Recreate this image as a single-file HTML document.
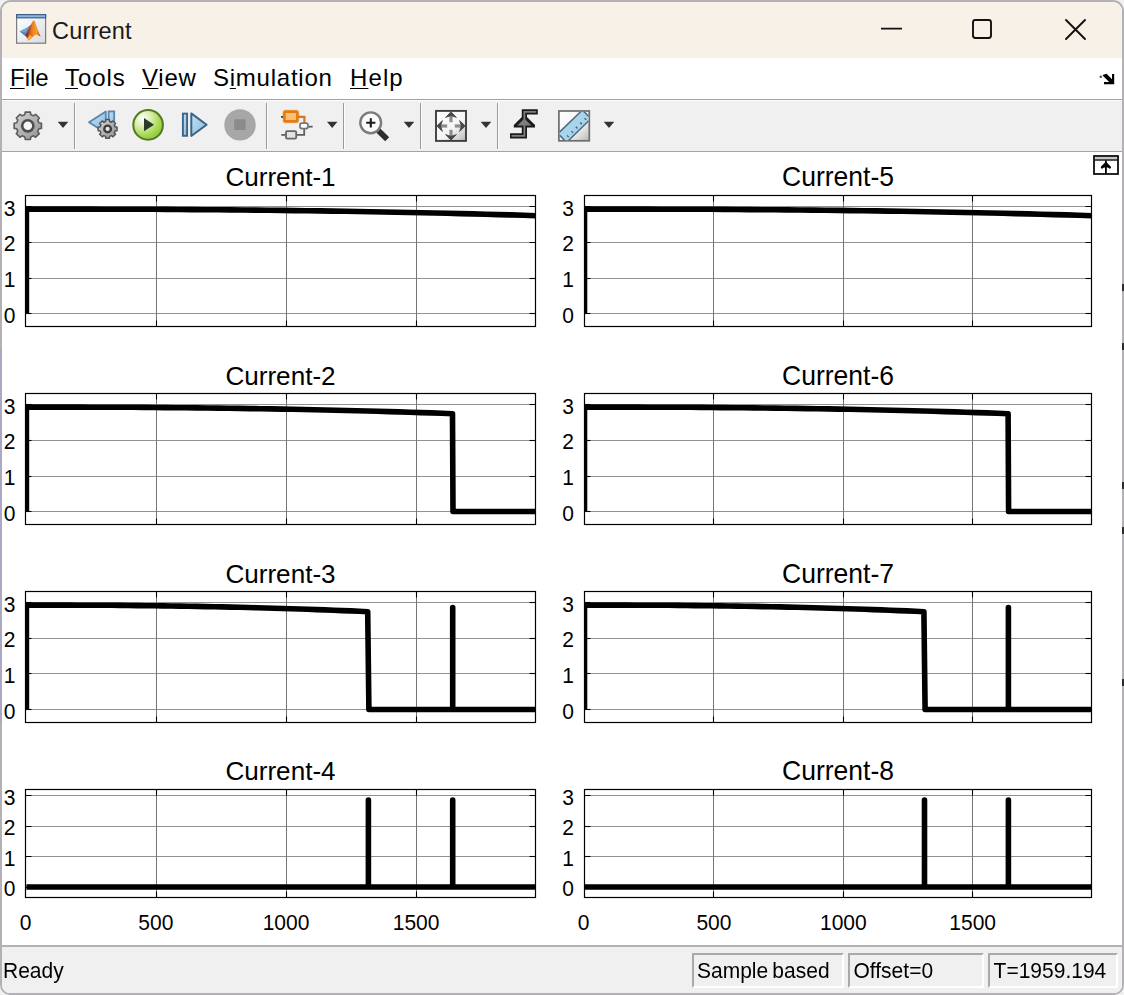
<!DOCTYPE html>
<html><head><meta charset="utf-8"><title>Current</title>
<style>
html,body{margin:0;padding:0;}
body{width:1124px;height:995px;overflow:hidden;background:#f1f1f1;font-family:"Liberation Sans", sans-serif;position:relative;}
.win{position:absolute;left:0;top:0;width:1124px;height:995px;box-sizing:border-box;border:2px solid #b3b1b5;border-radius:11px 11px 10px 10px;background:#fff;overflow:hidden;}
.abs{position:absolute;}
.titlebar{left:0;top:0;width:1124px;height:58px;background:#f8f1e8;}
.title{left:52px;top:17px;font-size:23.5px;line-height:28px;color:#1a1a1a;letter-spacing:0.18px;}
.menubar{left:0;top:58px;width:1124px;height:41px;background:#fff;}
.menu{top:64px;font-size:24px;line-height:28px;color:#000;white-space:nowrap;}
.menu u{text-decoration:underline;text-underline-offset:1.5px;text-decoration-thickness:1px;}
.toolbar{left:0;top:99px;width:1124px;height:53px;background:#f0f0f0;border-top:1px solid #a0a0a0;border-bottom:1px solid #a4a4a4;box-sizing:border-box;box-shadow:inset 0 1px 0 #fff;}
.sep{top:103px;width:1px;height:46px;background:#999;box-shadow:1px 0 0 #fcfcfc;}
.status{left:0;top:945px;width:1124px;height:50px;background:#f0f0f0;border-top:2px solid #b2b2b2;box-sizing:border-box;}
.stxt{font-size:21px;line-height:24px;color:#000;white-space:nowrap;transform:scale(1,1.05);transform-origin:0 19px;}
.sbox{top:953px;height:35px;box-sizing:border-box;border:2px solid;border-color:#a9a9a9 #fff #fff #a9a9a9;background:#f0f0f0;}
svg text{font-family:"Liberation Sans", sans-serif;fill:#000;}
.g{stroke:#929292;stroke-width:1;shape-rendering:crispEdges;}
.gv{stroke:#757575;}
.tk{stroke:#000;stroke-width:1.1;}
.bx{fill:none;stroke:#000;stroke-width:1.2;}
.tr{fill:none;stroke:#000;stroke-width:5.6;stroke-linejoin:round;stroke-linecap:butt;}
.yl{font-size:21px;text-anchor:end;}
.xl{font-size:21px;text-anchor:middle;}
.ti{text-anchor:middle;}
</style></head><body>
<div class="win">
<div style="position:absolute;left:-2px;top:-2px;width:1124px;height:995px;">
<div class="abs titlebar"></div>
<div class="abs title">Current</div>
<div class="abs menubar"></div>
<div class="abs menu" style="left:10px"><u>F</u>ile</div>
<div class="abs menu" style="left:65px;letter-spacing:0.9px"><u>T</u>ools</div>
<div class="abs menu" style="left:142px;letter-spacing:0.75px"><u>V</u>iew</div>
<div class="abs menu" style="left:213px;letter-spacing:0.75px">S<u>i</u>mulation</div>
<div class="abs menu" style="left:350px;letter-spacing:1.1px"><u>H</u>elp</div>
<div class="abs toolbar"></div>
<div class="abs sep" style="left:74px"></div>
<div class="abs sep" style="left:266px"></div>
<div class="abs sep" style="left:343px"></div>
<div class="abs sep" style="left:420px"></div>
<div class="abs sep" style="left:497px"></div>
<div class="abs status"></div>
<div class="abs stxt" style="left:3px;top:959px">Ready</div>
<div class="abs sbox" style="left:692px;width:152px"></div>
<div class="abs sbox" style="left:848px;width:136px"></div>
<div class="abs sbox" style="left:988px;width:130px"></div>
<div class="abs stxt" style="left:697px;top:959px;word-spacing:-1.7px">Sample based</div>
<div class="abs stxt" style="left:853.5px;top:959px">Offset=0</div>
<div class="abs stxt" style="left:993.6px;top:959px">T=1959.194</div>
<svg class="abs" style="left:0;top:0" width="1124" height="995" viewBox="0 0 1124 995">
<line x1="25.5" y1="313.5" x2="535.5" y2="313.5" class="g"/>
<line x1="25.5" y1="278.5" x2="535.5" y2="278.5" class="g"/>
<line x1="25.5" y1="242.5" x2="535.5" y2="242.5" class="g"/>
<line x1="25.5" y1="206.5" x2="535.5" y2="206.5" class="g"/>
<line x1="156.5" y1="195.5" x2="156.5" y2="326.5" class="g gv"/>
<line x1="286.5" y1="195.5" x2="286.5" y2="326.5" class="g gv"/>
<line x1="416.5" y1="195.5" x2="416.5" y2="326.5" class="g gv"/>
<clipPath id="c25_195"><rect x="25.5" y="195.5" width="510.0" height="131.0"/></clipPath>
<polyline points="26.4,313.5 26.4,209.1 26.4,209.1 39.1,209.1 51.9,209.1 64.6,209.1 77.3,209.1 90.1,209.1 102.8,209.2 115.6,209.2 128.3,209.2 141.1,209.3 153.8,209.3 166.6,209.4 179.3,209.5 192.1,209.6 204.8,209.7 217.6,209.8 230.3,209.9 243.1,210.0 255.8,210.1 268.6,210.3 281.4,210.4 294.1,210.6 306.8,210.7 319.6,210.9 332.4,211.1 345.1,211.3 357.9,211.5 370.6,211.7 383.4,212.0 396.1,212.2 408.9,212.5 421.6,212.7 434.4,213.0 447.1,213.3 459.9,213.6 472.6,213.9 485.4,214.2 498.1,214.6 510.9,214.9 523.6,215.3 536.4,215.7" class="tr" clip-path="url(#c25_195)"/>
<line x1="25.5" y1="313.5" x2="31.5" y2="313.5" class="tk"/>
<line x1="529.5" y1="313.5" x2="535.5" y2="313.5" class="tk"/>
<text transform="translate(15.5,322.5) scale(1,1.04)" class="yl">0</text>
<line x1="25.5" y1="278.5" x2="31.5" y2="278.5" class="tk"/>
<line x1="529.5" y1="278.5" x2="535.5" y2="278.5" class="tk"/>
<text transform="translate(15.5,286.8) scale(1,1.04)" class="yl">1</text>
<line x1="25.5" y1="242.5" x2="31.5" y2="242.5" class="tk"/>
<line x1="529.5" y1="242.5" x2="535.5" y2="242.5" class="tk"/>
<text transform="translate(15.5,251.2) scale(1,1.04)" class="yl">2</text>
<line x1="25.5" y1="206.5" x2="31.5" y2="206.5" class="tk"/>
<line x1="529.5" y1="206.5" x2="535.5" y2="206.5" class="tk"/>
<text transform="translate(15.5,215.5) scale(1,1.04)" class="yl">3</text>
<line x1="156.5" y1="195.5" x2="156.5" y2="201.5" class="tk"/>
<line x1="156.5" y1="320.5" x2="156.5" y2="326.5" class="tk"/>
<line x1="286.5" y1="195.5" x2="286.5" y2="201.5" class="tk"/>
<line x1="286.5" y1="320.5" x2="286.5" y2="326.5" class="tk"/>
<line x1="416.5" y1="195.5" x2="416.5" y2="201.5" class="tk"/>
<line x1="416.5" y1="320.5" x2="416.5" y2="326.5" class="tk"/>
<rect x="25.5" y="195.5" width="510.0" height="131.0" class="bx"/>
<text transform="translate(280.5,185.5) scale(1,1.02)" class="ti" font-size="26.1">Current-1</text>
<line x1="584.5" y1="313.5" x2="1091.5" y2="313.5" class="g"/>
<line x1="584.5" y1="278.5" x2="1091.5" y2="278.5" class="g"/>
<line x1="584.5" y1="242.5" x2="1091.5" y2="242.5" class="g"/>
<line x1="584.5" y1="206.5" x2="1091.5" y2="206.5" class="g"/>
<line x1="713.5" y1="195.5" x2="713.5" y2="326.5" class="g gv"/>
<line x1="843.5" y1="195.5" x2="843.5" y2="326.5" class="g gv"/>
<line x1="972.5" y1="195.5" x2="972.5" y2="326.5" class="g gv"/>
<clipPath id="c584_195"><rect x="584.5" y="195.5" width="507.0" height="131.0"/></clipPath>
<polyline points="584.5,313.5 584.5,209.1 584.5,209.1 597.2,209.1 609.9,209.1 622.5,209.1 635.2,209.1 647.9,209.1 660.5,209.2 673.2,209.2 685.9,209.2 698.6,209.3 711.2,209.3 723.9,209.4 736.6,209.5 749.3,209.6 762.0,209.7 774.6,209.8 787.3,209.9 800.0,210.0 812.6,210.1 825.3,210.3 838.0,210.4 850.7,210.6 863.3,210.7 876.0,210.9 888.7,211.1 901.4,211.3 914.1,211.5 926.7,211.7 939.4,212.0 952.1,212.2 964.8,212.5 977.4,212.7 990.1,213.0 1002.8,213.3 1015.5,213.6 1028.1,213.9 1040.8,214.2 1053.5,214.6 1066.2,214.9 1078.8,215.3 1091.5,215.7" class="tr" clip-path="url(#c584_195)"/>
<line x1="584.5" y1="313.5" x2="590.5" y2="313.5" class="tk"/>
<line x1="1085.5" y1="313.5" x2="1091.5" y2="313.5" class="tk"/>
<text transform="translate(574.0,322.5) scale(1,1.04)" class="yl">0</text>
<line x1="584.5" y1="278.5" x2="590.5" y2="278.5" class="tk"/>
<line x1="1085.5" y1="278.5" x2="1091.5" y2="278.5" class="tk"/>
<text transform="translate(574.0,286.8) scale(1,1.04)" class="yl">1</text>
<line x1="584.5" y1="242.5" x2="590.5" y2="242.5" class="tk"/>
<line x1="1085.5" y1="242.5" x2="1091.5" y2="242.5" class="tk"/>
<text transform="translate(574.0,251.2) scale(1,1.04)" class="yl">2</text>
<line x1="584.5" y1="206.5" x2="590.5" y2="206.5" class="tk"/>
<line x1="1085.5" y1="206.5" x2="1091.5" y2="206.5" class="tk"/>
<text transform="translate(574.0,215.5) scale(1,1.04)" class="yl">3</text>
<line x1="713.5" y1="195.5" x2="713.5" y2="201.5" class="tk"/>
<line x1="713.5" y1="320.5" x2="713.5" y2="326.5" class="tk"/>
<line x1="843.5" y1="195.5" x2="843.5" y2="201.5" class="tk"/>
<line x1="843.5" y1="320.5" x2="843.5" y2="326.5" class="tk"/>
<line x1="972.5" y1="195.5" x2="972.5" y2="201.5" class="tk"/>
<line x1="972.5" y1="320.5" x2="972.5" y2="326.5" class="tk"/>
<rect x="584.5" y="195.5" width="507.0" height="131.0" class="bx"/>
<text transform="translate(838.0,185.5) scale(1,1.02)" class="ti" font-size="26.5">Current-5</text>
<line x1="25.5" y1="511.5" x2="535.5" y2="511.5" class="g"/>
<line x1="25.5" y1="476.5" x2="535.5" y2="476.5" class="g"/>
<line x1="25.5" y1="440.5" x2="535.5" y2="440.5" class="g"/>
<line x1="25.5" y1="404.5" x2="535.5" y2="404.5" class="g"/>
<line x1="156.5" y1="393.5" x2="156.5" y2="524.5" class="g gv"/>
<line x1="286.5" y1="393.5" x2="286.5" y2="524.5" class="g gv"/>
<line x1="416.5" y1="393.5" x2="416.5" y2="524.5" class="g gv"/>
<clipPath id="c25_393"><rect x="25.5" y="393.5" width="510.0" height="131.0"/></clipPath>
<polyline points="26.4,511.5 26.4,407.1 26.4,407.1 37.0,407.1 47.7,407.1 58.3,407.1 69.0,407.1 79.6,407.1 90.3,407.2 100.9,407.2 111.6,407.2 122.2,407.3 132.9,407.3 143.5,407.4 154.2,407.5 164.8,407.6 175.5,407.7 186.1,407.8 196.8,407.9 207.5,408.0 218.1,408.1 228.8,408.3 239.4,408.4 250.1,408.6 260.7,408.7 271.4,408.9 282.0,409.1 292.7,409.3 303.3,409.5 314.0,409.7 324.6,410.0 335.3,410.2 345.9,410.5 356.6,410.7 367.3,411.0 377.9,411.3 388.6,411.6 399.2,411.9 409.9,412.2 420.5,412.6 431.2,412.9 441.8,413.3 452.5,413.7 453.0,511.5 536.4,511.5" class="tr" clip-path="url(#c25_393)"/>
<line x1="25.5" y1="511.5" x2="31.5" y2="511.5" class="tk"/>
<line x1="529.5" y1="511.5" x2="535.5" y2="511.5" class="tk"/>
<text transform="translate(15.5,520.5) scale(1,1.04)" class="yl">0</text>
<line x1="25.5" y1="476.5" x2="31.5" y2="476.5" class="tk"/>
<line x1="529.5" y1="476.5" x2="535.5" y2="476.5" class="tk"/>
<text transform="translate(15.5,484.8) scale(1,1.04)" class="yl">1</text>
<line x1="25.5" y1="440.5" x2="31.5" y2="440.5" class="tk"/>
<line x1="529.5" y1="440.5" x2="535.5" y2="440.5" class="tk"/>
<text transform="translate(15.5,449.2) scale(1,1.04)" class="yl">2</text>
<line x1="25.5" y1="404.5" x2="31.5" y2="404.5" class="tk"/>
<line x1="529.5" y1="404.5" x2="535.5" y2="404.5" class="tk"/>
<text transform="translate(15.5,413.5) scale(1,1.04)" class="yl">3</text>
<line x1="156.5" y1="393.5" x2="156.5" y2="399.5" class="tk"/>
<line x1="156.5" y1="518.5" x2="156.5" y2="524.5" class="tk"/>
<line x1="286.5" y1="393.5" x2="286.5" y2="399.5" class="tk"/>
<line x1="286.5" y1="518.5" x2="286.5" y2="524.5" class="tk"/>
<line x1="416.5" y1="393.5" x2="416.5" y2="399.5" class="tk"/>
<line x1="416.5" y1="518.5" x2="416.5" y2="524.5" class="tk"/>
<rect x="25.5" y="393.5" width="510.0" height="131.0" class="bx"/>
<text transform="translate(280.5,385.0) scale(1,1.02)" class="ti" font-size="26.1">Current-2</text>
<line x1="584.5" y1="511.5" x2="1091.5" y2="511.5" class="g"/>
<line x1="584.5" y1="476.5" x2="1091.5" y2="476.5" class="g"/>
<line x1="584.5" y1="440.5" x2="1091.5" y2="440.5" class="g"/>
<line x1="584.5" y1="404.5" x2="1091.5" y2="404.5" class="g"/>
<line x1="713.5" y1="393.5" x2="713.5" y2="524.5" class="g gv"/>
<line x1="843.5" y1="393.5" x2="843.5" y2="524.5" class="g gv"/>
<line x1="972.5" y1="393.5" x2="972.5" y2="524.5" class="g gv"/>
<clipPath id="c584_393"><rect x="584.5" y="393.5" width="507.0" height="131.0"/></clipPath>
<polyline points="584.5,511.5 584.5,407.1 584.5,407.1 595.1,407.1 605.7,407.1 616.3,407.1 626.9,407.1 637.5,407.1 648.0,407.2 658.6,407.2 669.2,407.2 679.8,407.3 690.4,407.3 701.0,407.4 711.6,407.5 722.2,407.6 732.8,407.7 743.4,407.8 753.9,407.9 764.5,408.0 775.1,408.1 785.7,408.3 796.3,408.4 806.9,408.6 817.5,408.7 828.1,408.9 838.7,409.1 849.3,409.3 859.9,409.5 870.4,409.7 881.0,410.0 891.6,410.2 902.2,410.5 912.8,410.7 923.4,411.0 934.0,411.3 944.6,411.6 955.2,411.9 965.8,412.2 976.4,412.6 986.9,412.9 997.5,413.3 1008.1,413.7 1008.6,511.5 1091.5,511.5" class="tr" clip-path="url(#c584_393)"/>
<line x1="584.5" y1="511.5" x2="590.5" y2="511.5" class="tk"/>
<line x1="1085.5" y1="511.5" x2="1091.5" y2="511.5" class="tk"/>
<text transform="translate(574.0,520.5) scale(1,1.04)" class="yl">0</text>
<line x1="584.5" y1="476.5" x2="590.5" y2="476.5" class="tk"/>
<line x1="1085.5" y1="476.5" x2="1091.5" y2="476.5" class="tk"/>
<text transform="translate(574.0,484.8) scale(1,1.04)" class="yl">1</text>
<line x1="584.5" y1="440.5" x2="590.5" y2="440.5" class="tk"/>
<line x1="1085.5" y1="440.5" x2="1091.5" y2="440.5" class="tk"/>
<text transform="translate(574.0,449.2) scale(1,1.04)" class="yl">2</text>
<line x1="584.5" y1="404.5" x2="590.5" y2="404.5" class="tk"/>
<line x1="1085.5" y1="404.5" x2="1091.5" y2="404.5" class="tk"/>
<text transform="translate(574.0,413.5) scale(1,1.04)" class="yl">3</text>
<line x1="713.5" y1="393.5" x2="713.5" y2="399.5" class="tk"/>
<line x1="713.5" y1="518.5" x2="713.5" y2="524.5" class="tk"/>
<line x1="843.5" y1="393.5" x2="843.5" y2="399.5" class="tk"/>
<line x1="843.5" y1="518.5" x2="843.5" y2="524.5" class="tk"/>
<line x1="972.5" y1="393.5" x2="972.5" y2="399.5" class="tk"/>
<line x1="972.5" y1="518.5" x2="972.5" y2="524.5" class="tk"/>
<rect x="584.5" y="393.5" width="507.0" height="131.0" class="bx"/>
<text transform="translate(838.0,385.0) scale(1,1.02)" class="ti" font-size="26.5">Current-6</text>
<line x1="25.5" y1="709.5" x2="535.5" y2="709.5" class="g"/>
<line x1="25.5" y1="673.5" x2="535.5" y2="673.5" class="g"/>
<line x1="25.5" y1="638.5" x2="535.5" y2="638.5" class="g"/>
<line x1="25.5" y1="602.5" x2="535.5" y2="602.5" class="g"/>
<line x1="156.5" y1="591.5" x2="156.5" y2="722.5" class="g gv"/>
<line x1="286.5" y1="591.5" x2="286.5" y2="722.5" class="g gv"/>
<line x1="416.5" y1="591.5" x2="416.5" y2="722.5" class="g gv"/>
<clipPath id="c25_591"><rect x="25.5" y="591.5" width="510.0" height="131.0"/></clipPath>
<polyline points="26.4,709.5 26.4,605.1 26.4,605.1 34.9,605.1 43.4,605.1 52.0,605.1 60.5,605.1 69.0,605.1 77.6,605.2 86.1,605.2 94.6,605.2 103.2,605.3 111.7,605.3 120.2,605.4 128.8,605.5 137.3,605.6 145.8,605.7 154.4,605.8 162.9,605.9 171.4,606.0 180.0,606.1 188.5,606.3 197.0,606.4 205.6,606.6 214.1,606.7 222.7,606.9 231.2,607.1 239.7,607.3 248.3,607.5 256.8,607.7 265.3,608.0 273.9,608.2 282.4,608.5 290.9,608.7 299.5,609.0 308.0,609.3 316.5,609.6 325.1,609.9 333.6,610.2 342.1,610.6 350.7,610.9 359.2,611.3 367.7,611.7 368.9,709.5 452.7,709.5 452.7,607.5 452.7,709.5 536.4,709.5" class="tr" clip-path="url(#c25_591)"/>
<line x1="25.5" y1="709.5" x2="31.5" y2="709.5" class="tk"/>
<line x1="529.5" y1="709.5" x2="535.5" y2="709.5" class="tk"/>
<text transform="translate(15.5,718.5) scale(1,1.04)" class="yl">0</text>
<line x1="25.5" y1="673.5" x2="31.5" y2="673.5" class="tk"/>
<line x1="529.5" y1="673.5" x2="535.5" y2="673.5" class="tk"/>
<text transform="translate(15.5,682.8) scale(1,1.04)" class="yl">1</text>
<line x1="25.5" y1="638.5" x2="31.5" y2="638.5" class="tk"/>
<line x1="529.5" y1="638.5" x2="535.5" y2="638.5" class="tk"/>
<text transform="translate(15.5,647.2) scale(1,1.04)" class="yl">2</text>
<line x1="25.5" y1="602.5" x2="31.5" y2="602.5" class="tk"/>
<line x1="529.5" y1="602.5" x2="535.5" y2="602.5" class="tk"/>
<text transform="translate(15.5,611.5) scale(1,1.04)" class="yl">3</text>
<line x1="156.5" y1="591.5" x2="156.5" y2="597.5" class="tk"/>
<line x1="156.5" y1="716.5" x2="156.5" y2="722.5" class="tk"/>
<line x1="286.5" y1="591.5" x2="286.5" y2="597.5" class="tk"/>
<line x1="286.5" y1="716.5" x2="286.5" y2="722.5" class="tk"/>
<line x1="416.5" y1="591.5" x2="416.5" y2="597.5" class="tk"/>
<line x1="416.5" y1="716.5" x2="416.5" y2="722.5" class="tk"/>
<rect x="25.5" y="591.5" width="510.0" height="131.0" class="bx"/>
<text transform="translate(280.5,583.0) scale(1,1.02)" class="ti" font-size="26.1">Current-3</text>
<line x1="584.5" y1="709.5" x2="1091.5" y2="709.5" class="g"/>
<line x1="584.5" y1="673.5" x2="1091.5" y2="673.5" class="g"/>
<line x1="584.5" y1="638.5" x2="1091.5" y2="638.5" class="g"/>
<line x1="584.5" y1="602.5" x2="1091.5" y2="602.5" class="g"/>
<line x1="713.5" y1="591.5" x2="713.5" y2="722.5" class="g gv"/>
<line x1="843.5" y1="591.5" x2="843.5" y2="722.5" class="g gv"/>
<line x1="972.5" y1="591.5" x2="972.5" y2="722.5" class="g gv"/>
<clipPath id="c584_591"><rect x="584.5" y="591.5" width="507.0" height="131.0"/></clipPath>
<polyline points="584.5,709.5 584.5,605.1 584.5,605.1 593.0,605.1 601.5,605.1 610.0,605.1 618.4,605.1 626.9,605.1 635.4,605.2 643.9,605.2 652.4,605.2 660.9,605.3 669.3,605.3 677.8,605.4 686.3,605.5 694.8,605.6 703.3,605.7 711.8,605.8 720.3,605.9 728.7,606.0 737.2,606.1 745.7,606.3 754.2,606.4 762.7,606.6 771.2,606.7 779.6,606.9 788.1,607.1 796.6,607.3 805.1,607.5 813.6,607.7 822.1,608.0 830.6,608.2 839.0,608.5 847.5,608.7 856.0,609.0 864.5,609.3 873.0,609.6 881.5,609.9 890.0,610.2 898.4,610.6 906.9,610.9 915.4,611.3 923.9,611.7 925.1,709.5 1008.4,709.5 1008.4,607.5 1008.4,709.5 1091.5,709.5" class="tr" clip-path="url(#c584_591)"/>
<line x1="584.5" y1="709.5" x2="590.5" y2="709.5" class="tk"/>
<line x1="1085.5" y1="709.5" x2="1091.5" y2="709.5" class="tk"/>
<text transform="translate(574.0,718.5) scale(1,1.04)" class="yl">0</text>
<line x1="584.5" y1="673.5" x2="590.5" y2="673.5" class="tk"/>
<line x1="1085.5" y1="673.5" x2="1091.5" y2="673.5" class="tk"/>
<text transform="translate(574.0,682.8) scale(1,1.04)" class="yl">1</text>
<line x1="584.5" y1="638.5" x2="590.5" y2="638.5" class="tk"/>
<line x1="1085.5" y1="638.5" x2="1091.5" y2="638.5" class="tk"/>
<text transform="translate(574.0,647.2) scale(1,1.04)" class="yl">2</text>
<line x1="584.5" y1="602.5" x2="590.5" y2="602.5" class="tk"/>
<line x1="1085.5" y1="602.5" x2="1091.5" y2="602.5" class="tk"/>
<text transform="translate(574.0,611.5) scale(1,1.04)" class="yl">3</text>
<line x1="713.5" y1="591.5" x2="713.5" y2="597.5" class="tk"/>
<line x1="713.5" y1="716.5" x2="713.5" y2="722.5" class="tk"/>
<line x1="843.5" y1="591.5" x2="843.5" y2="597.5" class="tk"/>
<line x1="843.5" y1="716.5" x2="843.5" y2="722.5" class="tk"/>
<line x1="972.5" y1="591.5" x2="972.5" y2="597.5" class="tk"/>
<line x1="972.5" y1="716.5" x2="972.5" y2="722.5" class="tk"/>
<rect x="584.5" y="591.5" width="507.0" height="131.0" class="bx"/>
<text transform="translate(838.0,583.0) scale(1,1.02)" class="ti" font-size="26.5">Current-7</text>
<line x1="25.5" y1="887.5" x2="535.5" y2="887.5" class="g"/>
<line x1="25.5" y1="856.5" x2="535.5" y2="856.5" class="g"/>
<line x1="25.5" y1="826.5" x2="535.5" y2="826.5" class="g"/>
<line x1="25.5" y1="795.5" x2="535.5" y2="795.5" class="g"/>
<line x1="156.5" y1="789.5" x2="156.5" y2="897.5" class="g gv"/>
<line x1="286.5" y1="789.5" x2="286.5" y2="897.5" class="g gv"/>
<line x1="416.5" y1="789.5" x2="416.5" y2="897.5" class="g gv"/>
<clipPath id="c25_789"><rect x="25.5" y="789.5" width="510.0" height="108.0"/></clipPath>
<polyline points="26.4,887.0 368.4,887.0 368.4,800.1 368.4,887.0 452.7,887.0 452.7,800.1 452.7,887.0 536.4,887.0" class="tr" clip-path="url(#c25_789)"/>
<line x1="25.5" y1="887.5" x2="31.5" y2="887.5" class="tk"/>
<line x1="529.5" y1="887.5" x2="535.5" y2="887.5" class="tk"/>
<text transform="translate(15.5,896.0) scale(1,1.04)" class="yl">0</text>
<line x1="25.5" y1="856.5" x2="31.5" y2="856.5" class="tk"/>
<line x1="529.5" y1="856.5" x2="535.5" y2="856.5" class="tk"/>
<text transform="translate(15.5,865.5) scale(1,1.04)" class="yl">1</text>
<line x1="25.5" y1="826.5" x2="31.5" y2="826.5" class="tk"/>
<line x1="529.5" y1="826.5" x2="535.5" y2="826.5" class="tk"/>
<text transform="translate(15.5,835.0) scale(1,1.04)" class="yl">2</text>
<line x1="25.5" y1="795.5" x2="31.5" y2="795.5" class="tk"/>
<line x1="529.5" y1="795.5" x2="535.5" y2="795.5" class="tk"/>
<text transform="translate(15.5,804.5) scale(1,1.04)" class="yl">3</text>
<line x1="156.5" y1="789.5" x2="156.5" y2="795.5" class="tk"/>
<line x1="156.5" y1="891.5" x2="156.5" y2="897.5" class="tk"/>
<line x1="286.5" y1="789.5" x2="286.5" y2="795.5" class="tk"/>
<line x1="286.5" y1="891.5" x2="286.5" y2="897.5" class="tk"/>
<line x1="416.5" y1="789.5" x2="416.5" y2="795.5" class="tk"/>
<line x1="416.5" y1="891.5" x2="416.5" y2="897.5" class="tk"/>
<rect x="25.5" y="789.5" width="510.0" height="108.0" class="bx"/>
<text transform="translate(280.5,779.5) scale(1,1.02)" class="ti" font-size="26.1">Current-4</text>
<text transform="translate(25.7,930) scale(1,1.04)" class="xl">0</text>
<text transform="translate(155.8,930) scale(1,1.04)" class="xl">500</text>
<text transform="translate(286.0,930) scale(1,1.04)" class="xl">1000</text>
<text transform="translate(416.1,930) scale(1,1.04)" class="xl">1500</text>
<line x1="584.5" y1="887.5" x2="1091.5" y2="887.5" class="g"/>
<line x1="584.5" y1="856.5" x2="1091.5" y2="856.5" class="g"/>
<line x1="584.5" y1="826.5" x2="1091.5" y2="826.5" class="g"/>
<line x1="584.5" y1="795.5" x2="1091.5" y2="795.5" class="g"/>
<line x1="713.5" y1="789.5" x2="713.5" y2="897.5" class="g gv"/>
<line x1="843.5" y1="789.5" x2="843.5" y2="897.5" class="g gv"/>
<line x1="972.5" y1="789.5" x2="972.5" y2="897.5" class="g gv"/>
<clipPath id="c584_789"><rect x="584.5" y="789.5" width="507.0" height="108.0"/></clipPath>
<polyline points="584.5,887.0 924.5,887.0 924.5,800.1 924.5,887.0 1008.4,887.0 1008.4,800.1 1008.4,887.0 1091.5,887.0" class="tr" clip-path="url(#c584_789)"/>
<line x1="584.5" y1="887.5" x2="590.5" y2="887.5" class="tk"/>
<line x1="1085.5" y1="887.5" x2="1091.5" y2="887.5" class="tk"/>
<text transform="translate(574.0,896.0) scale(1,1.04)" class="yl">0</text>
<line x1="584.5" y1="856.5" x2="590.5" y2="856.5" class="tk"/>
<line x1="1085.5" y1="856.5" x2="1091.5" y2="856.5" class="tk"/>
<text transform="translate(574.0,865.5) scale(1,1.04)" class="yl">1</text>
<line x1="584.5" y1="826.5" x2="590.5" y2="826.5" class="tk"/>
<line x1="1085.5" y1="826.5" x2="1091.5" y2="826.5" class="tk"/>
<text transform="translate(574.0,835.0) scale(1,1.04)" class="yl">2</text>
<line x1="584.5" y1="795.5" x2="590.5" y2="795.5" class="tk"/>
<line x1="1085.5" y1="795.5" x2="1091.5" y2="795.5" class="tk"/>
<text transform="translate(574.0,804.5) scale(1,1.04)" class="yl">3</text>
<line x1="713.5" y1="789.5" x2="713.5" y2="795.5" class="tk"/>
<line x1="713.5" y1="891.5" x2="713.5" y2="897.5" class="tk"/>
<line x1="843.5" y1="789.5" x2="843.5" y2="795.5" class="tk"/>
<line x1="843.5" y1="891.5" x2="843.5" y2="897.5" class="tk"/>
<line x1="972.5" y1="789.5" x2="972.5" y2="795.5" class="tk"/>
<line x1="972.5" y1="891.5" x2="972.5" y2="897.5" class="tk"/>
<rect x="584.5" y="789.5" width="507.0" height="108.0" class="bx"/>
<text transform="translate(838.0,779.5) scale(1,1.02)" class="ti" font-size="26.5">Current-8</text>
<text transform="translate(583.5,930) scale(1,1.04)" class="xl">0</text>
<text transform="translate(713.9,930) scale(1,1.04)" class="xl">500</text>
<text transform="translate(843.3,930) scale(1,1.04)" class="xl">1000</text>
<text transform="translate(972.7,930) scale(1,1.04)" class="xl">1500</text>
<defs>
<linearGradient id="gGear" x1="0" y1="0" x2="1" y2="1"><stop offset="0" stop-color="#d4d4d4"/><stop offset="0.5" stop-color="#b4b4b4"/><stop offset="1" stop-color="#8e8e8e"/></linearGradient>
<radialGradient id="gPlay" cx="0.32" cy="0.28" r="0.85"><stop offset="0" stop-color="#ffffff"/><stop offset="0.3" stop-color="#dff0b8"/><stop offset="0.7" stop-color="#a4d84e"/><stop offset="1" stop-color="#84bd32"/></radialGradient>
<linearGradient id="gBlue" x1="0" y1="0" x2="1" y2="1"><stop offset="0" stop-color="#c4e2f6"/><stop offset="1" stop-color="#86b8de"/></linearGradient>
<linearGradient id="gBox" x1="0" y1="0" x2="1" y2="1"><stop offset="0" stop-color="#ffffff"/><stop offset="0.6" stop-color="#f4f4f4"/><stop offset="1" stop-color="#b8b8b8"/></linearGradient>
<linearGradient id="gOr" x1="0" y1="0" x2="0" y2="1"><stop offset="0" stop-color="#f7a84a"/><stop offset="1" stop-color="#f08a24"/></linearGradient>
<linearGradient id="gWin" x1="0" y1="0" x2="1" y2="1"><stop offset="0" stop-color="#ffffff"/><stop offset="1" stop-color="#d8dde2"/></linearGradient>
<linearGradient id="gMl" x1="0" y1="0" x2="1" y2="0"><stop offset="0" stop-color="#7a1a10"/><stop offset="0.3" stop-color="#c8421a"/><stop offset="0.55" stop-color="#f08a24"/><stop offset="0.75" stop-color="#f6a030"/><stop offset="1" stop-color="#b83c18"/></linearGradient>
<filter id="blur1"><feGaussianBlur stdDeviation="0.6"/></filter>
<filter id="blur2"><feGaussianBlur stdDeviation="1.2"/></filter>
</defs>
<g filter="url(#blur1)">
<path d="M30.83,136.89 L30.40,139.45 L25.20,139.45 L24.77,136.89 L22.10,135.79 L19.99,137.30 L16.30,133.61 L17.81,131.50 L16.71,128.83 L14.15,128.40 L14.15,123.20 L16.71,122.77 L17.81,120.10 L16.30,117.99 L19.99,114.30 L22.10,115.81 L24.77,114.71 L25.20,112.15 L30.40,112.15 L30.83,114.71 L33.50,115.81 L35.61,114.30 L39.30,117.99 L37.79,120.10 L38.89,122.77 L41.45,123.20 L41.45,128.40 L38.89,128.83 L37.79,131.50 L39.30,133.61 L35.61,137.30 L33.50,135.79Z" fill="url(#gGear)" stroke="#5c5c5c" stroke-width="1.6" stroke-linejoin="round"/>
<circle cx="27.8" cy="125.8" r="5.6" fill="#f8f8f8" stroke="#4e4e4e" stroke-width="2.6"/>
</g>
<path d="M57.8,121.8 L68.2,121.8 L63,128 Z" fill="#3c3c3c" filter="url(#blur1)"/>
<path d="M58.4,122 L67.6,122 L63,127.3 Z" fill="#333"/>
<g filter="url(#blur1)">
<path d="M89,122.2 L105.8,111.4 L105.8,133 Z" fill="url(#gBlue)" stroke="#5a86b0" stroke-width="1.8" stroke-linejoin="round"/>
<rect x="108.6" y="111.4" width="5.6" height="21" fill="url(#gBlue)" stroke="#5a86b0" stroke-width="1.8"/>
<path d="M109.63,136.33 L109.40,138.33 L105.80,138.33 L105.57,136.33 L103.78,135.59 L102.20,136.84 L99.66,134.30 L100.91,132.72 L100.17,130.93 L98.17,130.70 L98.17,127.10 L100.17,126.87 L100.91,125.08 L99.66,123.50 L102.20,120.96 L103.78,122.21 L105.57,121.47 L105.80,119.47 L109.40,119.47 L109.63,121.47 L111.42,122.21 L113.00,120.96 L115.54,123.50 L114.29,125.08 L115.03,126.87 L117.03,127.10 L117.03,130.70 L115.03,130.93 L114.29,132.72 L115.54,134.30 L113.00,136.84 L111.42,135.59Z" fill="url(#gGear)" stroke="#555" stroke-width="1.5" stroke-linejoin="round"/>
<circle cx="107.6" cy="128.9" r="3.3" fill="#e8e8e8" stroke="#3c3c3c" stroke-width="2.4"/>
</g>
<g filter="url(#blur1)">
<circle cx="148.1" cy="124.9" r="14.8" fill="url(#gPlay)" stroke="#527a22" stroke-width="2"/>
<path d="M144,118 L154,124.7 L144,131.3 Z" fill="#2c3a2c"/>
</g>
<g filter="url(#blur1)">
<rect x="182.9" y="113.6" width="4.2" height="22.2" fill="url(#gBlue)" stroke="#3e6484" stroke-width="1.9"/>
<path d="M191.3,113.4 L206.6,124.7 L191.3,136 Z" fill="url(#gBlue)" stroke="#3e6484" stroke-width="2" stroke-linejoin="round"/>
</g>
<g filter="url(#blur1)">
<circle cx="240" cy="124.9" r="15.7" fill="#a7a7a7"/>
<rect x="234.2" y="119.2" width="11.4" height="10.8" rx="1" fill="#8b8b8b"/>
</g>
<g filter="url(#blur1)">
<rect x="282.2" y="109.4" width="17.4" height="14.2" rx="3" fill="#fbd28c" opacity="0.85"/>
<path d="M281,116.9 H284" stroke="#444" stroke-width="1.8"/>
<path d="M298,116.9 H304.4 V122.6" fill="none" stroke="#d9751c" stroke-width="2.2"/>
<rect x="284.4" y="111.6" width="13" height="9.8" rx="1.2" fill="#fbc078" stroke="#e27a16" stroke-width="2.6"/>
<path d="M304.2,129 V134.9 H297" fill="none" stroke="#5e5e5e" stroke-width="1.8"/>
<path d="M281.3,134.9 H285.5" stroke="#5e5e5e" stroke-width="1.8"/>
<path d="M308.5,126.7 H312.6" stroke="#5e5e5e" stroke-width="1.8"/>
<rect x="300" y="123.2" width="8" height="5.4" rx="2" fill="#fafafa" stroke="#747474" stroke-width="1.7"/>
<rect x="286" y="131.1" width="10.2" height="7.6" rx="1.2" fill="#e2e2e2" stroke="#666" stroke-width="1.8"/>
</g>
<path d="M327.0,121.8 L337.4,121.8 L332.2,128 Z" fill="#3c3c3c" filter="url(#blur1)"/>
<path d="M327.59999999999997,122 L336.8,122 L332.2,127.3 Z" fill="#333"/>
<g filter="url(#blur1)">
<path d="M378,130.2 L387.2,139.2" stroke="#2e2e2e" stroke-width="5.8" stroke-linecap="butt"/>
<circle cx="370.7" cy="122.8" r="10.4" fill="#fafcfd" stroke="#7c7c7c" stroke-width="2.4"/>
<path d="M366.2,122.8 H375.4 M370.8,118.2 V127.4" stroke="#1a1a1a" stroke-width="2.1"/>
</g>
<path d="M403.8,121.8 L414.2,121.8 L409,128 Z" fill="#3c3c3c" filter="url(#blur1)"/>
<path d="M404.4,122 L413.6,122 L409,127.3 Z" fill="#333"/>
<g filter="url(#blur1)">
<rect x="436" y="110.9" width="30" height="30" fill="url(#gBox)" stroke="#3e3e3e" stroke-width="1.9"/>
<path d="M451.0,122.2 L451.0,115.5" stroke="#8c8c8c" stroke-width="3.2"/>
<path d="M456.4,117.4 L451.0,111.8 L445.6,117.4 L451.0,115.6 Z" fill="#454545" stroke="#454545" stroke-width="0.8" stroke-linejoin="round"/>
<path d="M451.0,129.8 L451.0,136.5" stroke="#8c8c8c" stroke-width="3.2"/>
<path d="M445.6,134.6 L451.0,140.2 L456.4,134.6 L451.0,136.4 Z" fill="#454545" stroke="#454545" stroke-width="0.8" stroke-linejoin="round"/>
<path d="M447.2,126.0 L440.5,126.0" stroke="#8c8c8c" stroke-width="3.2"/>
<path d="M442.4,120.6 L436.8,126.0 L442.4,131.4 L440.6,126.0 Z" fill="#454545" stroke="#454545" stroke-width="0.8" stroke-linejoin="round"/>
<path d="M454.8,126.0 L461.5,126.0" stroke="#8c8c8c" stroke-width="3.2"/>
<path d="M459.6,131.4 L465.2,126.0 L459.6,120.6 L461.4,126.0 Z" fill="#454545" stroke="#454545" stroke-width="0.8" stroke-linejoin="round"/>
</g>
<path d="M480.8,121.8 L491.2,121.8 L486,128 Z" fill="#3c3c3c" filter="url(#blur1)"/>
<path d="M481.4,122 L490.6,122 L486,127.3 Z" fill="#333"/>
<g filter="url(#blur1)">
<path d="M512.5,135.8 H524.4 V111.8 H535.2" fill="none" stroke="#1c1c1c" stroke-width="5.2" stroke-linejoin="miter" stroke-linecap="square"/>
<path d="M524.4,114.6 L535,125 L535,127.6 L513.8,127.6 L513.8,125 Z" fill="#1c1c1c"/>
<path d="M512.5,135.8 H524.4 V111.8 H535.2" fill="none" stroke="#7e7e7e" stroke-width="1.8" stroke-linecap="square"/>
<path d="M524.4,118.4 L531.4,125.4 L517.4,125.4 Z" fill="#7e7e7e"/>
</g>
<g filter="url(#blur1)">
<rect x="558.9" y="111" width="30.4" height="29.8" fill="url(#gBox)" stroke="#6c6c6c" stroke-width="1.7"/>
<clipPath id="cr"><rect x="559.6" y="111.8" width="29" height="28.4"/></clipPath>
<g clip-path="url(#cr)"><path d="M558,133.6 L582.4,110 L591,118.6 L566.6,142.4 Z" fill="#a9d5ea" stroke="#4c6c82" stroke-width="1.5"/>
<path d="M567.0,135.4 l1.7,1.7" stroke="#3c6078" stroke-width="1.3"/>
<path d="M571.4,131.1 l1.7,1.7" stroke="#3c6078" stroke-width="1.3"/>
<path d="M575.8,126.8 l1.7,1.7" stroke="#3c6078" stroke-width="1.3"/>
<path d="M580.2,122.5 l1.7,1.7" stroke="#3c6078" stroke-width="1.3"/>
<path d="M584.6,118.2 l1.7,1.7" stroke="#3c6078" stroke-width="1.3"/>
</g></g>
<path d="M603.8,121.8 L614.2,121.8 L609,128 Z" fill="#3c3c3c" filter="url(#blur1)"/>
<path d="M604.4,122 L613.6,122 L609,127.3 Z" fill="#333"/>
<g>
<circle cx="1100.8" cy="76.8" r="1.3" fill="#555"/>
<path d="M1102.6,75 L1106.6,73.8 L1112,79.2 L1112,74 L1114.2,74 L1114.2,84.2 L1104,84.2 L1104,82 L1109.2,82 L1103.6,76.4 Z" fill="#000"/>
</g>
<g>
<rect x="1094" y="156" width="24" height="18" fill="#fff" stroke="#000" stroke-width="1.7"/>
<rect x="1095.2" y="157" width="21.6" height="2.2" fill="#c6c6c6"/>
<path d="M1094,160 H1118" stroke="#1a1a1a" stroke-width="1.5"/>
<path d="M1105.9,160.5 V173.4" stroke="#000" stroke-width="1.8"/>
<path d="M1102,167.4 L1105.9,163.2 L1109.8,167.4" fill="#000" stroke="#000" stroke-width="2.4" stroke-linecap="round" stroke-linejoin="round"/>
</g>
<path d="M881,28.6 H902" stroke="#111" stroke-width="1.9"/>
<rect x="973" y="20" width="18" height="18" rx="2.4" fill="none" stroke="#111" stroke-width="1.9"/>
<path d="M1066,20 L1085,39 M1085,20 L1066,39" stroke="#111" stroke-width="1.9" stroke-linecap="round"/>
<g filter="url(#blur1)">
<rect x="16.6" y="14.6" width="29" height="28.6" fill="url(#gWin)" stroke="#7c7c7c" stroke-width="1.2"/>
<rect x="16.6" y="14.6" width="29" height="3.2" fill="#8db4e0" stroke="#3c5f88" stroke-width="1.2"/>
<path d="M19.6,31.4 L27.4,27.6 L31.6,24.2 L28.6,33.6 L25.2,36 Z" fill="#4f86b8"/>
<path d="M19.6,31.4 L27.4,27.6 L30,25.6 L25.4,32.6 Z" fill="#6fa6d4"/>
<path d="M25.2,35.2 C28,32 30.4,25 32.6,21.4 C33.6,20.2 34.4,20.4 35,21.8 C36.6,26 38.4,32 40.6,36.6 C38.4,35.6 36.4,34.4 35,35 C32.6,36.4 31,39.4 28.6,40.4 C27.4,38.4 26.4,37 25.2,35.2 Z" fill="url(#gMl)"/>
<path d="M28.6,40.4 C31,39.4 32.6,36.4 35,35 C33.6,32 33,26 33.4,21 C31.8,25 30.4,32 26.8,37.4 Z" fill="#f3922a" opacity="0.35"/>
<path d="M28.6,40.4 C30,39.6 31,38 32,36.8 L30,35 L27.4,38.4 Z" fill="#fbc04a" opacity="0.9"/>
</g>
</svg>
</div>
</div>
<div style="position:absolute;left:1122px;top:284px;width:2px;height:7px;background:#2c2c2c"></div><div style="position:absolute;left:1122px;top:343px;width:2px;height:7px;background:#2c2c2c"></div><div style="position:absolute;left:1122px;top:482px;width:2px;height:7px;background:#2c2c2c"></div><div style="position:absolute;left:1122px;top:527px;width:2px;height:7px;background:#2c2c2c"></div><div style="position:absolute;left:1122px;top:679px;width:2px;height:7px;background:#2c2c2c"></div><div style="position:absolute;left:0;top:349px;width:2px;height:373px;background:#aaa8c4"></div>
</body></html>
